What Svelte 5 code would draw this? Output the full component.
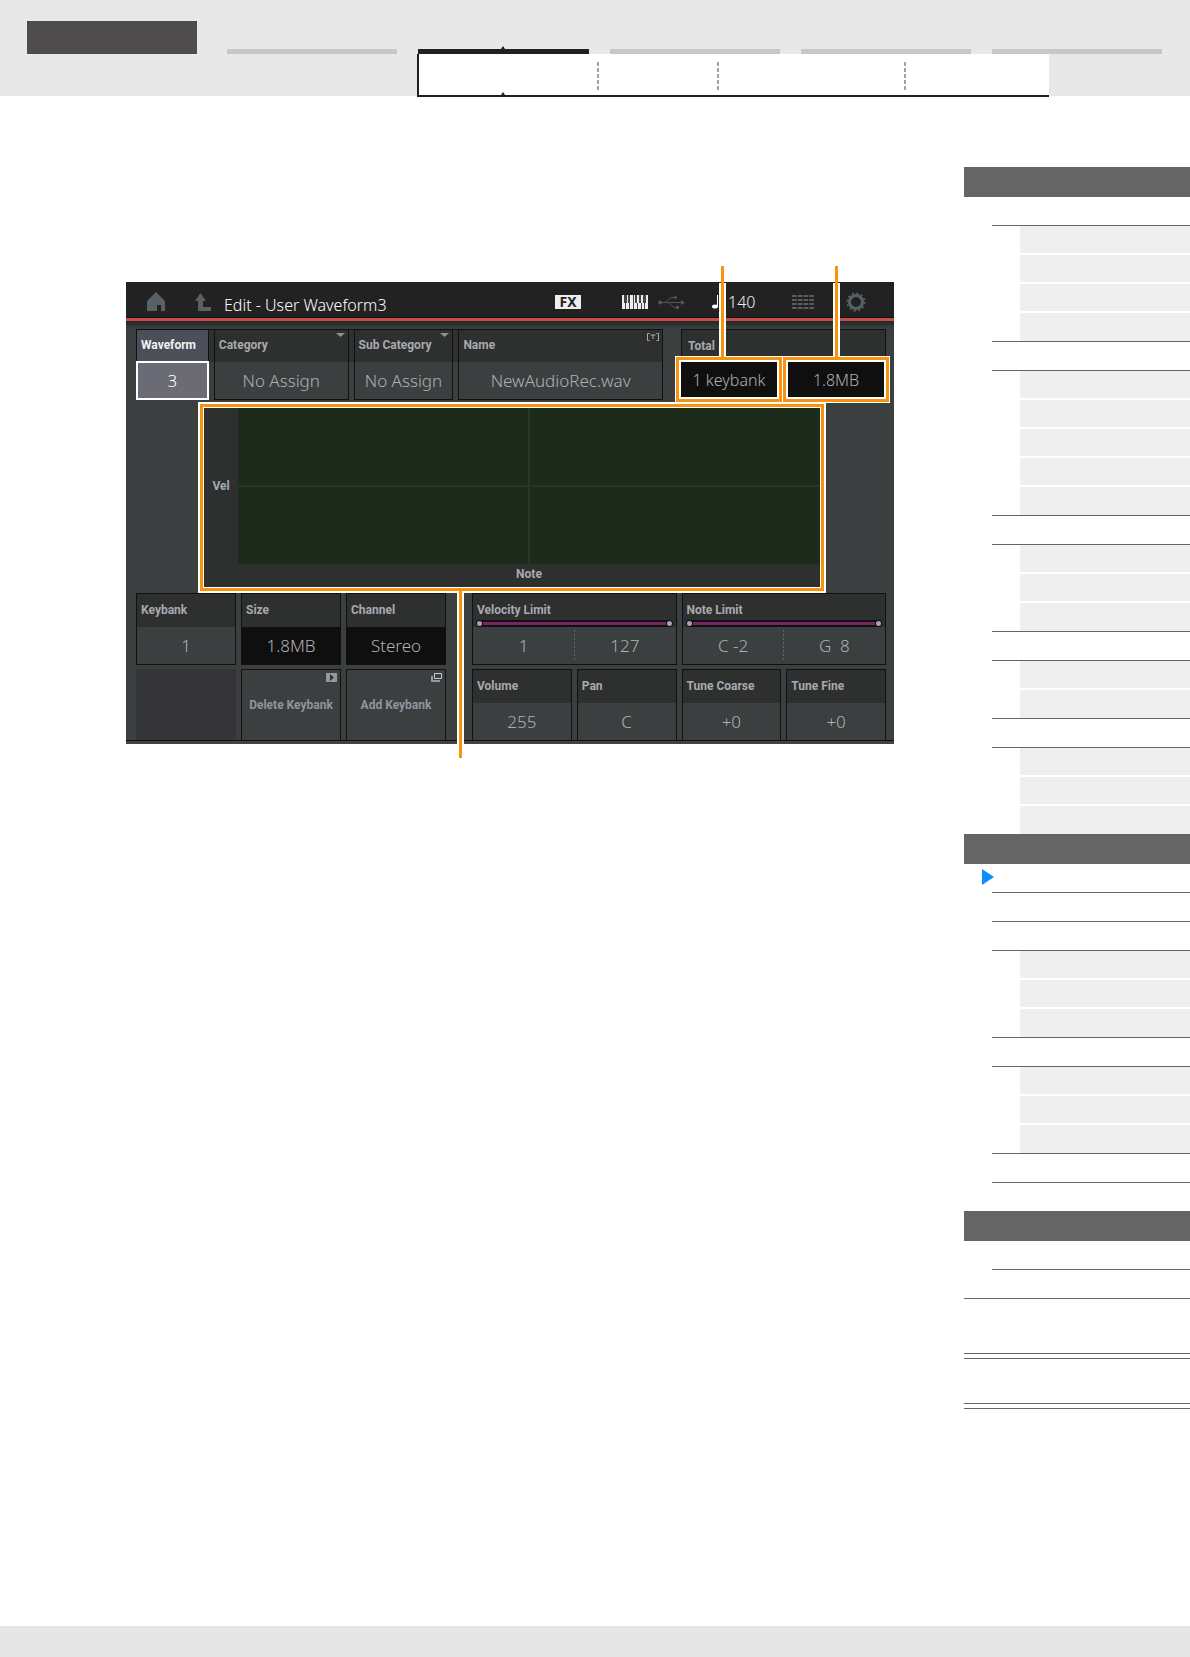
<script>
  const tabs = [false, true, false, false, false];
  const sections = [
    { groups: [{ subs: 4 }, { subs: 5 }, { subs: 3 }, { subs: 2 }, { subs: 3 }] },
    { groups: [{ current: true, subs: 0 }, { subs: 0 }, { subs: 3 }, { subs: 3 }, { subs: 0 }, { subs: 0 }] },
    { groups: [{ subs: 0 }, { subs: 0 }] }
  ];
  const parameters = [
    { id: 'volume', label: 'Volume', value: '255' },
    { id: 'pan', label: 'Pan', value: 'C' },
    { id: 'coarse', label: 'Tune Coarse', value: '+0' },
    { id: 'fine', label: 'Tune Fine', value: '+0' }
  ];
  const limits = [
    { id: 'velocity', label: 'Velocity Limit', low: '1', high: '127' },
    { id: 'note', label: 'Note Limit', low: 'C -2', high: 'G  8' }
  ];
</script>

<div class="page">
  <header>
    <nav class="tabs">
      <div class="brand"></div>
      {#each tabs as active}
        <div class="tab" class:active></div>
      {/each}
    </nav>
    <div class="subnav">
      <div></div>
      <div></div>
      <div></div>
      <div></div>
    </div>
  </header>

  <div class="content">
    <main>
      <section class="device">
        <div class="topbar">
          <svg width="18" height="19" viewBox="0 0 18 19"><path d="M9 0 18 9V19H14V13H10V19H0V9Z" fill="#596066" /></svg>
          <svg width="16" height="18" viewBox="0 0 16 18"><path d="M5.500 0 11 8H8V14H16V18H3V8H0Z" fill="#596066" /></svg>
          <h1>Edit - User Waveform3</h1>
          <div class="status">
            <span class="fx">FX</span>
            <svg width="26" height="14" viewBox="0 0 26 14">
              <path d="M0 0H26V14H0Z" fill="#eee" />
              <path d="M2 0H5V8H2ZM6 0H8V8H6ZM13 0H15V8H13ZM17 0H19V8H17ZM21 0H24V8H21Z" fill="#444" />
              <path d="M3.500 8V14M7.500 8V14M11.500 0V14M15.500 8V14M19.500 8V14M22.500 8V14" stroke="#444" />
            </svg>
            <svg width="27" height="14" viewBox="0 0 27 14" fill="none" stroke="#51565b" stroke-width="1">
              <path d="M2 7.500H24M6 7.500C10 7 11 2.500 14 2.500H17M10 7.500C13 8 14 12.500 17 12.500H19" />
              <path d="M23 5 27 7.500 23 10Z" fill="#51565b" stroke="none" />
              <circle cx="17.500" cy="2.500" r="1.500" fill="#51565b" stroke="none" />
              <path d="M18 11H21V14H18Z" fill="#51565b" stroke="none" />
              <circle cx="2" cy="7.500" r="2" fill="#51565b" stroke="none" />
            </svg>
            <svg width="7" height="14" viewBox="0 0 7 14"><path d="M5 0H6V12H5Z" fill="#fff" /><ellipse cx="3" cy="11.500" rx="3" ry="2" fill="#fff" /></svg>
            <span class="tempo">140</span>
            <svg width="22" height="14" viewBox="0 0 22 14" stroke="#575b62" stroke-width="2" stroke-dasharray="4.750 1">
              <path d="M0 1H22M0 5H22M0 9H22M0 13H22" />
            </svg>
            <svg width="20" height="20" viewBox="0 0 20 20" fill="none" stroke="#596066">
              <circle cx="10" cy="10" r="6.500" stroke-width="3" />
              <circle cx="10" cy="10" r="8.750" stroke-width="1.500" stroke-dasharray="2.290 2.290" />
            </svg>
          </div>
        </div>

        <div class="body">
          <div class="row first">
            <div class="strip">
              <div class="card selected">
                <label for="waveform">Waveform</label>
                <input id="waveform" value="3" />
              </div>
              <div class="card">
                <label for="category">Category</label>
                <select id="category"><option>No Assign</option></select>
                <svg class="corner" width="9" height="4" viewBox="0 0 9 4"><path d="M0 0H9L4.500 4Z" fill="#929292" /></svg>
              </div>
              <div class="card">
                <label for="subcategory">Sub Category</label>
                <select id="subcategory"><option>No Assign</option></select>
                <svg class="corner" width="9" height="4" viewBox="0 0 9 4"><path d="M0 0H9L4.500 4Z" fill="#929292" /></svg>
              </div>
              <div class="card">
                <label for="name">Name</label>
                <input id="name" value="NewAudioRec.wav" />
                <svg class="corner" width="12" height="8" viewBox="0 0 12 8" fill="none" stroke="#aaa"><path d="M2.500 .5H.5V7.500H2.500M9.500 .5H11.500V7.500H9.500M3.500 2H8.500M6 2V6" /></svg>
              </div>
            </div>
            <div class="card total">
              <span class="label">Total</span>
              <div class="totals">
                <output class="marked">1 keybank<i class="leader up"></i></output>
                <output class="marked">1.8MB<i class="leader up"></i></output>
              </div>
            </div>
          </div>

          <div class="plot">
            <span class="axis">Vel</span>
            <div class="graph"></div>
            <span class="axis note">Note</span>
            <i class="leader down"></i>
          </div>

          <div class="row lower">
            <div class="grid three">
              <div class="card">
                <label for="keybank">Keybank</label>
                <input id="keybank" value="1" />
              </div>
              <div class="card">
                <span class="label">Size</span>
                <output class="dark">1.8MB</output>
              </div>
              <div class="card">
                <span class="label">Channel</span>
                <output class="dark">Stereo</output>
              </div>
              <div class="blank"></div>
              <button>
                Delete Keybank
                <svg class="mark" width="11" height="9" viewBox="0 0 11 9"><path d="M0 0H11V9H0Z" fill="#99979d" /><path d="M4 1 8 4.500 4 8Z" fill="#303233" /></svg>
              </button>
              <button>
                Add Keybank
                <svg class="mark" width="11" height="9" viewBox="0 0 11 9"><path d="M0 3H2V7H9V9H0Z" fill="#99979d" /><path d="M3.500 .5H10.500V5.500H3.500Z" fill="none" stroke="#c8c8cb" /></svg>
              </button>
            </div>
            <div class="grid four">
              {#each limits as limit}
                <div class="card wide">
                  <label for={limit.id + '-low'}>{limit.label}</label>
                  <div class="rail"><i></i><b></b><i></i></div>
                  <div class="pair">
                    <input id={limit.id + '-low'} value={limit.low} />
                    <input aria-label={limit.label} value={limit.high} />
                  </div>
                </div>
              {/each}
              {#each parameters as item}
                <div class="card">
                  <label for={item.id}>{item.label}</label>
                  <input id={item.id} value={item.value} />
                </div>
              {/each}
            </div>
          </div>
        </div>
      </section>
    </main>

    <aside>
      {#each sections as section}
        <div class="band"></div>
        <div class="section">
          {#each section.groups as group}
            <div class="group">
              <div class="entry">
                {#if group.current}
                  <svg class="pointer" width="12" height="16" viewBox="0 0 12 16"><path d="M0 0 12 8 0 16Z" fill="#0c8cff" /></svg>
                {/if}
              </div>
              {#if group.subs}
                <div class="subs">
                  {#each Array(group.subs) as _}<div></div>{/each}
                </div>
              {/if}
            </div>
          {/each}
        </div>
      {/each}
      <div class="links tall"></div>
      <div class="links"></div>
      <div class="end"></div>
    </aside>
  </div>

  <footer></footer>
</div>

<style>
  :global(body) { margin: 0; background: #fff; }
  .page, .page :global(*) { box-sizing: border-box; }
  .page {
    min-height: 100vh;
    display: flex;
    flex-direction: column;
    font-family: "Noto Sans", sans-serif;
  }

  header { height: 96px; padding: 21px 28px 0 27px; background: #e8e8e8; }
  .tabs { display: flex; align-items: flex-end; gap: 21px; }
  .brand { flex: 1; height: 33px; margin-right: 9px; background: #4e4c4d; }
  .tab { flex: 1; height: 5px; background: #c7c7c7; }
  .tab.active { position: relative; background: #231f20; }
  .tab.active::before, .subnav::before {
    content: "";
    position: absolute;
    left: 83px;
    bottom: 100%;
    border: 2px solid transparent;
    border-top: 0;
    border-bottom: 3px solid #231f20;
  }
  .subnav::before { bottom: 0; left: 82px; }
  .subnav {
    position: relative;
    height: 43px;
    margin: 0 113px 0 390px;
    display: grid;
    grid-template-columns: 178fr 120fr 187fr 145fr;
    padding: 8px 0 5px;
    background: #fff;
    border-left: 2px solid #231f20;
    border-bottom: 2px solid #231f20;
  }
  .subnav div + div {
    background: repeating-linear-gradient(#a2a2a2 0 4px, #fff 4px 6px) left / 2px 100% no-repeat;
  }

  .content { flex: 1; display: flex; align-items: flex-start; }
  main { flex: 1; padding: 186px 70px 60px 126px; }

  .device { background: #3b3f40; color: #a9a9af; border-bottom: 3px solid #434344; }
  .topbar {
    height: 39px;
    display: flex;
    align-items: center;
    padding: 3px 28px 0 21px;
    background: #222;
    border-bottom: 3px solid #c94e49;
    box-shadow: inset 0 -1px #111;
  }
  .topbar > svg + svg { margin-left: 30px; }
  h1 { flex: 1; margin: 6px 0 0 13px; font-size: 16px; line-height: 20px; font-weight: 300; color: #fff; white-space: nowrap; }
  .status { display: grid; grid-template-columns: 67px 36px 54px 16px 64px 54px 20px; align-items: center; }
  .fx {
    width: 26px;
    height: 14px;
    background: #eee;
    color: #222;
    font-size: 14px;
    line-height: 14px;
    font-weight: 700;
    text-align: center;
  }
  .tempo { font-size: 16px; line-height: 20px; font-weight: 300; color: #eee; }

  .body {
    padding: 8px 8px 0 10px;
    border-bottom: 1px solid #111;
    background: linear-gradient(#252827, #3b3f40 8px);
  }
  .row { display: grid; }
  .first { grid-template-columns: 527fr 205fr; gap: 18px; }
  .strip {
    display: grid;
    grid-template-columns: 73fr 135fr 100fr 205fr;
    gap: 5px;
    background: linear-gradient(#111 1px, #2f3131 1px 33px, #3b3f40 33px);
  }
  .card {
    position: relative;
    min-width: 0;
    display: flex;
    flex-direction: column;
    border: 1px solid #111;
    background: #3b3f40;
  }
  label, .label {
    height: 32px;
    padding-left: 4px;
    background: #2e3030;
    font: 700 12px/32px Roboto, sans-serif;
    white-space: nowrap;
  }
  .strip label { line-height: 30px; }
  .total .label { padding-left: 6px; }
  input, select, output {
    display: block;
    width: 100%;
    min-width: 0;
    height: 37px;
    margin: 0;
    padding: 0;
    border: 0;
    border-radius: 0;
    outline: 0;
    appearance: none;
    background: transparent;
    color: #b0b0b5;
    font: 300 17px/37px "Noto Sans", sans-serif;
    text-align: center;
    text-align-last: center;
  }
  .selected label { background: #4c4f59; color: #f1f1f1; }
  .selected input { background: #6b6b76; color: #fff; box-shadow: inset 0 0 0 1px #fff, 0 0 0 1px #fff; }
  .corner { position: absolute; top: 3px; right: 3px; }
  .total { background: #2e3030; border-bottom-color: #3b3f40; }
  .totals { display: flex; gap: 11px; margin: 0 1px 0 -1px; }
  .marked {
    position: relative;
    height: 35px;
    background: #0f0f0f;
    font-size: 16px;
    line-height: 37px;
    box-shadow: 0 0 0 2px #fff, 0 0 0 5px #f7930f, 0 0 0 6px #fff;
  }
  .leader { position: absolute; z-index: 1; width: 3px; background: #f7930f; }
  .leader::before { content: ""; position: absolute; z-index: -1; left: -2px; right: -2px; height: 74px; bottom: 1px; border: 2px solid #fff; border-width: 0 2px; }
  .up { left: 42%; bottom: 39px; height: 92px; }
  .marked + .marked .up { left: 49%; }
  .down { left: 41.4%; top: calc(100% + 3px); height: 168px; }
  .down::before { top: 2px; bottom: auto; height: 152px; }

  .plot {
    position: relative;
    display: grid;
    grid-template: 156px 23px / 34px 1fr;
    margin: 8px 66px 6px 68px;
    background: #2e3030;
    box-shadow: 0 0 0 1px #fff, 0 0 0 4px #f7930f, 0 0 0 6px #fff;
  }
  .graph {
    background:
      linear-gradient(#223a25, #223a25) center / 2px 100% no-repeat,
      linear-gradient(#223a25, #223a25) center / 100% 2px no-repeat,
      #1d2b1b;
  }
  .axis { align-self: center; text-align: center; font: 700 12px/20px Roboto, sans-serif; }
  .note { grid-column: 2; align-self: start; }

  .lower { grid-template-columns: 310fr 414fr; gap: 26px; }
  .grid { display: grid; grid-template-rows: 72px 71px; column-gap: 5px; row-gap: 4px; }
  .three { grid-template-columns: repeat(3, 1fr); }
  .four { grid-template-columns: repeat(4, 1fr); }
  .three > .card:nth-child(n), .wide { height: 72px; }
  .wide { grid-column: span 2; }
  .lower label, .lower .label { height: 33px; line-height: 33px; }
  .dark { background: #0f0f0f; }
  .blank { background: #353436; }
  .four > .card:nth-child(n + 3), button { border-bottom: 0; }
  button {
    position: relative;
    margin: 0;
    padding: 0;
    border: 1px solid #111;
    border-bottom: 0;
    border-radius: 0;
    background: #3b3f40;
    color: #93939d;
    font: 700 12px/20px Roboto, sans-serif;
    white-space: nowrap;
  }
  .mark { position: absolute; top: 3px; right: 3px; }
  .rail {
    position: absolute;
    top: 26px;
    left: 3px;
    right: 3px;
    height: 7px;
    display: flex;
    align-items: center;
    gap: 1px;
    padding: 0 1px;
    border-radius: 4px;
    background: #111;
  }
  .rail i { width: 5px; height: 5px; border-radius: 50%; background: #a5a5ab; }
  .rail b { flex: 1; height: 3px; background: #7a2467; }
  .pair { display: grid; grid-template-columns: 1fr 1fr; background: repeating-linear-gradient(#64676a 0 2px, #3b3f40 2px 4px) center / 1px 32px no-repeat; }
  .pair input { white-space: pre; }

  aside { flex: 0 0 226px; padding-top: 71px; }
  .band { height: 30px; background: #656565; }
  .group { margin-left: 28px; }
  .entry { position: relative; height: 29px; border-bottom: 1px solid #656565; }
  .pointer { position: absolute; top: 5px; left: -10px; }
  .subs { margin-left: 28px; display: grid; gap: 2px; height: auto; }
  .subs div { height: 27px; background: #efefef; }
  .subs div:last-child { height: 28px; }
  .group:not(:last-child) .subs { margin-left: 0; padding-left: 28px; border-bottom: 1px solid #656565; }
  .section:nth-of-type(4) .group:last-child .entry { height: 28px; border: 0; }
  .section:nth-of-type(6) .group:last-child { margin-left: 0; }
  .links { height: 50px; border-bottom: 1px solid #656565; position: relative; padding-top: 4px; }
  .links::before { content: ""; display: block; border-top: 1px solid #656565; }
  .links.tall { height: 55px; padding: 0; }
  .links.tall::before { display: none; }
  .end { height: 5px; border-bottom: 1px solid #656565; }

  footer { height: 31px; background: #e6e6e6; }
</style>
